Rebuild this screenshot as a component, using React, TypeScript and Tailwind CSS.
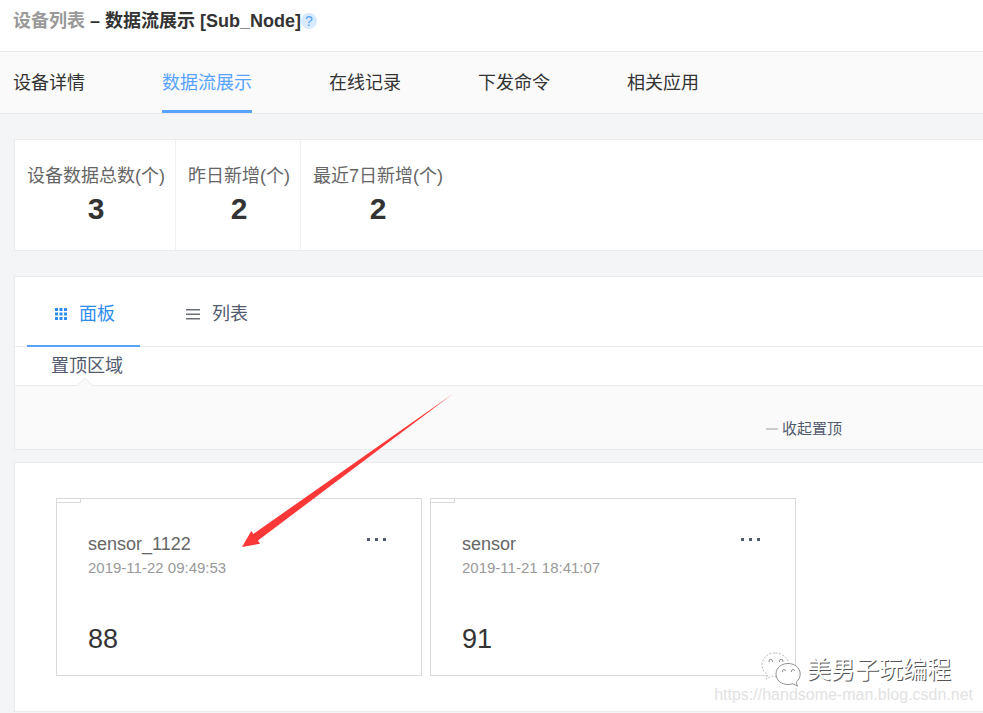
import { useState } from "react";

const tabs = ["设备详情", "数据流展示", "在线记录", "下发命令", "相关应用"];

const stats = [
  { label: "设备数据总数(个)", value: 3 },
  { label: "昨日新增(个)", value: 2 },
  { label: "最近7日新增(个)", value: 2 },
];

const streams = [
  { name: "sensor_1122", time: "2019-11-22 09:49:53", value: 88 },
  { name: "sensor", time: "2019-11-21 18:41:07", value: 91 },
];

function GridIcon() {
  return (
    <svg className="w-3 h-3" viewBox="0 0 12 12" fill="currentColor">
      {[0, 4.5, 9].map((y) =>
        [0, 4.5, 9].map((x) => (
          <rect key={`${x}-${y}`} x={x} y={y} width="3" height="3" />
        ))
      )}
    </svg>
  );
}

function ListIcon() {
  return (
    <svg className="w-[14px] h-3" viewBox="0 0 14 12" fill="#6b7078">
      <rect x="0" y="1" width="14" height="1.5" />
      <rect x="0" y="5.5" width="14" height="1.5" />
      <rect x="0" y="10" width="14" height="1.5" />
    </svg>
  );
}

function WechatIcon() {
  return (
    <svg
      className="w-10 h-9"
      viewBox="0 0 40 36"
      fill="#ffffff"
      stroke="#777777"
      strokeWidth="0.8"
    >
      <path
        stroke="#aaaaaa"
        strokeDasharray="2 1.5"
        d="M14 1C6.500 1 1 6 1 13c0 4 2 7 5.500 9.500L5 27l5.500-3c1.500.5 3 .8 5 .8C23 24.500 28 19.500 28 13S21.500 1 14 1z"
      />
      <path d="M27 11.500c-7 0-12 4.500-12 10.500s5 10.500 12 10.500c2 0 3.500-.3 5-.8l4.500 2.500-1.300-4c2.500-2 4-5 4-8.200 0-6-5.200-10.500-12.200-10.500z" />
      <path
        fill="none"
        d="M8 10v-1a1.700 1.700 0 0 1 3.400 0v1M18.500 10v-1a1.700 1.700 0 0 1 3.400 0v1M21.500 20v-1a1.500 1.500 0 0 1 3 0M30.500 20v-1a1.500 1.500 0 0 1 3 0"
      />
    </svg>
  );
}

export default function App() {
  const [activeTab, setActiveTab] = useState("数据流展示");
  const [view, setView] = useState<"panel" | "list">("panel");

  return (
    <div className="relative min-h-screen overflow-hidden bg-[#f4f5f7] font-['Liberation_Sans','Noto_Sans_CJK_SC',sans-serif] text-lg text-[#333333]">
      {/* Title */}
      <header className="flex items-center h-[52px] px-[13px] pb-[10px] bg-white border-b border-[#ebebeb]">
        <h1 className="font-bold whitespace-pre">
          <a href="#devices" className="text-[#999999]">
            设备列表
          </a>
          {" – 数据流展示 [Sub_Node]"}
        </h1>
        <button
          aria-label="帮助"
          className="w-4 h-4 rounded-full bg-[#d8eaff] text-[#57a3f3] text-sm leading-4 text-center"
        >
          ?
        </button>
      </header>

      {/* Page tabs */}
      <nav className="flex gap-[77px] h-[62px] px-[13px] bg-[#fafafa] border-b border-[#ebebeb]">
        {tabs.map((tab) => (
          <button
            key={tab}
            onClick={() => setActiveTab(tab)}
            className={`border-b-3 pt-1 whitespace-nowrap ${
              activeTab === tab
                ? "border-[#57a3ff] text-[#57a3ff]"
                : "border-transparent"
            }`}
          >
            {tab}
          </button>
        ))}
      </nav>

      <main className="pl-[14px] pt-[25px]">
        {/* Stats */}
        <section className="flex h-[112px] bg-white border border-r-0 border-[#ebebeb]">
          {stats.map((stat) => (
            <div
              key={stat.label}
              className="pl-3 pr-[10px] pt-[22px] text-center border-r border-[#f1f1f1] last:border-r-0"
            >
              <div className="leading-7 text-[#666666]">{stat.label}</div>
              <div className="text-[30px] leading-[38px] font-bold">
                {stat.value}
              </div>
            </div>
          ))}
        </section>

        {/* View switch and pinned area */}
        <section className="mt-[25px] bg-white border border-r-0 border-[#ebebeb]">
          <div className="flex gap-[18px] h-[70px] pl-3 border-b border-[#ebebeb]">
            <button
              onClick={() => setView("panel")}
              className={`-mb-px flex items-center gap-3 pl-7 pr-[25px] pt-[6px] border-b-2 ${
                view === "panel"
                  ? "border-[#57a3ff] text-[#2d8cf0]"
                  : "border-transparent text-[#515a6e]"
              }`}
            >
              <GridIcon />
              面板
            </button>
            <button
              onClick={() => setView("list")}
              className={`-mb-px flex items-center gap-3 pl-7 pr-[25px] pt-[6px] border-b-2 ${
                view === "list"
                  ? "border-[#57a3ff] text-[#2d8cf0]"
                  : "border-transparent text-[#515a6e]"
              }`}
            >
              <ListIcon />
              列表
            </button>
          </div>
          <div className="relative h-[39px] pl-9 leading-[38px] text-[#515a6e] border-b border-[#ebebeb]">
            置顶区域
            <svg
              className="absolute left-[62px] -bottom-px w-4 h-[9px]"
              viewBox="0 0 16 9"
            >
              <path d="M0 9 L8 1 L16 9" fill="#fafafa" stroke="#ebebeb" />
            </svg>
          </div>
          <div className="flex justify-end h-[63px] pt-[31px] pr-[141px] bg-[#fafafa]">
            <button className="flex items-center gap-1 h-6 text-[15px] text-[#515a6e]">
              <span className="w-3 h-[2px] bg-[#cccccc]" />
              收起置顶
            </button>
          </div>
        </section>

        {/* Data streams */}
        <section className="mt-3 flex flex-wrap gap-2 pl-[41px] pt-[35px] pb-[35px] bg-white border border-r-0 border-[#ebebeb]">
          {streams.map((stream) => (
            <article
              key={stream.name}
              className="relative w-[366px] h-[178px] px-[31px] pt-[31px] border border-[#d9d9d9]"
            >
              <span className="absolute left-0 top-0 w-6 h-1 border-r border-b border-[#d9d9d9]" />
              <div className="flex justify-between">
                <h2 className="leading-7 text-[#666666]">{stream.name}</h2>
                <button
                  aria-label="更多"
                  className="flex items-center gap-[5px] h-[18px] mr-1"
                >
                  <span className="w-[3px] h-[3px] bg-[#515a6e]" />
                  <span className="w-[3px] h-[3px] bg-[#515a6e]" />
                  <span className="w-[3px] h-[3px] bg-[#515a6e]" />
                </button>
              </div>
              <time className="block text-[15px] leading-5 text-[#999999]">
                {stream.time}
              </time>
              <div className="mt-[41px] text-[27px] leading-10">
                {stream.value}
              </div>
            </article>
          ))}
        </section>
      </main>

      {/* Arrow pointing at the first stream */}
      <svg
        className="absolute left-[242px] top-[394px] w-[211px] h-[153px] pointer-events-none"
        viewBox="0 0 211 153"
      >
        <path
          d="M0 153 L9.300 137 L11.300 140 L210.700 0 L16 146.500 L18 149.700 Z"
          fill="#fb3838"
        />
      </svg>

      {/* Watermark */}
      <div className="absolute right-[10px] top-[652px] flex flex-col items-end pointer-events-none">
        <div className="flex items-center gap-[6px] h-9 pr-[22px]">
          <WechatIcon />
          <span className="text-2xl text-white [text-shadow:1px_1px_0_#555555]">
            美男子玩编程
          </span>
        </div>
        <span className="text-base leading-[14px] text-[#e2e2e2]">
          https://handsome-man.blog.csdn.net
        </span>
      </div>
    </div>
  );
}
